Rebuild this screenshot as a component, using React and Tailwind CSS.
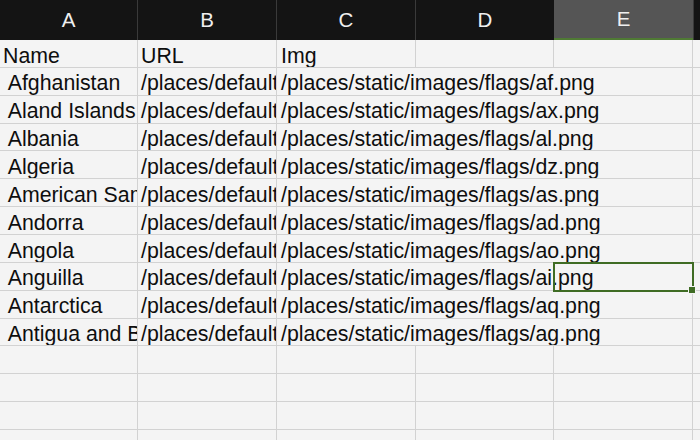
import React from "react";

const data = [
  ["Afghanistan", "afghanistan", "af"],
  ["Aland Islands", "aland-islands", "ax"],
  ["Albania", "albania", "al"],
  ["Algeria", "algeria", "dz"],
  ["American Samoa", "american-samoa", "as"],
  ["Andorra", "andorra", "ad"],
  ["Angola", "angola", "ao"],
  ["Anguilla", "anguilla", "ai"],
  ["Antarctica", "antarctica", "aq"],
  ["Antigua and Barbuda", "antigua-and-barbuda", "ag"],
];

const txt = "whitespace-pre overflow-hidden leading-[26px] pt-[2.5px] text-[21.3px] text-[#0e0e0e]";

function HeaderRow() {
  return (
    <div className="flex h-[40px] bg-[#141414] text-[#efefef] text-[20.5px] leading-[40px]">
      <div className="w-[138px] shrink-0 border-r border-[#3a3a3a] text-center">A</div>
      <div className="w-[139px] shrink-0 border-r border-[#3a3a3a] text-center">B</div>
      <div className="w-[139px] shrink-0 border-r border-[#3a3a3a] text-center">C</div>
      <div className="w-[138px] shrink-0 text-center">D</div>
      <div className="w-[139px] shrink-0 bg-[#555555] border-b-2 border-[#4f7a34] text-center leading-[38px]">E</div>
      <div className="flex-1 border-l border-[#3a3a3a]"></div>
    </div>
  );
}

function FullRow({ a = "", b = "", c = "" }) {
  return (
    <div className="flex h-[27.86px] border-b border-[#d2d2d2]">
      <div className={"w-[138px] shrink-0 border-r border-[#d2d2d2] pl-[3px] " + txt}>{a}</div>
      <div className={"w-[139px] shrink-0 border-r border-[#d2d2d2] pl-[3px] " + txt}>{b}</div>
      <div className={"w-[139px] shrink-0 border-r border-[#d2d2d2] pl-[4px] " + txt}>{c}</div>
      <div className="w-[138px] shrink-0 border-r border-[#d2d2d2]"></div>
      <div className="w-[139px] shrink-0 border-r border-[#d2d2d2]"></div>
      <div className="flex-1"></div>
    </div>
  );
}

function DataRow({ a, b, c }) {
  return (
    <div className="flex h-[27.86px] border-b border-[#d2d2d2]">
      <div className={"w-[138px] shrink-0 border-r border-[#d2d2d2] pl-[3px] " + txt}>{a}</div>
      <div className={"w-[139px] shrink-0 border-r border-[#d2d2d2] pl-[3px] " + txt}>{b}</div>
      <div className={"w-[416px] shrink-0 border-r border-[#d2d2d2] pl-[4px] " + txt}>{c}</div>
      <div className="flex-1"></div>
    </div>
  );
}

export default function App() {
  return (
    <div className="relative w-[700px] h-[440px] overflow-hidden bg-[#f4f4f4] font-['Liberation_Sans',Arial,sans-serif]">
      <HeaderRow />
      <FullRow a="Name" b="URL" c="Img" />
      {data.map(([n, slug, code]) => (
        <DataRow
          key={code}
          a={" " + n}
          b={"/places/default/" + slug}
          c={"/places/static/images/flags/" + code + ".png"}
        />
      ))}
      <FullRow />
      <FullRow />
      <FullRow />
      <FullRow />
      <div className="absolute left-[553px] top-[262px] w-[141px] h-[30px] border-2 border-[#3f6c24]">
        <div className="absolute -right-[4px] -bottom-[4px] w-[6px] h-[6px] bg-[#3f6c24] border border-[#f4f4f4] box-content"></div>
      </div>
    </div>
  );
}
